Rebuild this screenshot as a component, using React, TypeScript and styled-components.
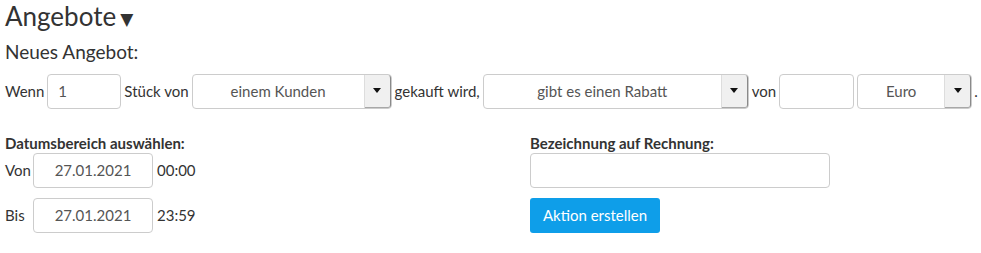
import { createGlobalStyle } from "styled-components";
import styled from "styled-components";

const GlobalStyle = createGlobalStyle`
  html, body {
    margin: 0;
    padding: 0;
    background: #fff;
  }
  body {
    font-family: Lato, "Open Sans", "Liberation Sans", sans-serif;
    font-size: 15px;
    color: #333;
  }
`;

export default function App() {
    return (
        <Page>
            <GlobalStyle />
            <Title>Angebote<Caret>▼</Caret></Title>
            <SubTitle>Neues Angebot:</SubTitle>
            <OfferRow>
                <Text>Wenn</Text>
                <Input width={74} defaultValue="1" align="left" />
                <Text>Stück von</Text>
                <Select width={200} label="einem Kunden" />
                <Text>gekauft wird,</Text>
                <Select width={266} label="gibt es einen Rabatt" />
                <Text>von</Text>
                <Input width={75} defaultValue="" />
                <Select width={115} label="Euro" />
                <Dot>.</Dot>
            </OfferRow>
            <Columns>
                <Column>
                    <Label>Datumsbereich auswählen:</Label>
                    <DateRow>
                        <DateLabel>Von</DateLabel>
                        <Input width={120} defaultValue="27.01.2021" />
                        <Text>00:00</Text>
                    </DateRow>
                    <DateRow>
                        <DateLabel>Bis</DateLabel>
                        <Input width={120} defaultValue="27.01.2021" />
                        <Text>23:59</Text>
                    </DateRow>
                </Column>
                <Column>
                    <Label>Bezeichnung auf Rechnung:</Label>
                    <Input width={300} defaultValue="" />
                    <Button type="button">Aktion erstellen</Button>
                </Column>
            </Columns>
        </Page>
    )
}

const Select = ({ width, label }: { width: number; label: string }) => (
    <SelectBox style={{ width }}>
        <SelectText>{label}</SelectText>
        <SelectButton>
            <svg width="8" height="5" viewBox="0 0 8 5"><path d="M0 0h8L4 5z" fill="#111" /></svg>
        </SelectButton>
    </SelectBox>
)

const Page = styled.div`
  padding: 1px 5px 0;
`

const Title = styled.h2`
  margin: 0;
  font-size: 26px;
  font-weight: 400;
  line-height: 1.2;
  color: #333;
  white-space: nowrap;
`

const Caret = styled.span`
  font-family: "DejaVu Sans", sans-serif;
  font-size: 17px;
  margin-left: 4px;
  vertical-align: 1px;
`

const SubTitle = styled.h3`
  margin: 9px 0 0;
  font-size: 19px;
  font-weight: 400;
  line-height: 1.2;
`

const OfferRow = styled.div`
  margin-top: 10px;
  display: flex;
  align-items: center;
  gap: 3px;
  height: 35px;
`

const Text = styled.span`
  white-space: nowrap;
  flex-shrink: 0;
`

const Dot = styled.span`
  margin-left: -1px;
`

const Input = styled.input<{ width: number; align?: string }>`
  box-sizing: border-box;
  width: ${(props) => props.width}px;
  height: 35px;
  border: 1px solid #ccc;
  border-radius: 4px;
  padding: 0 10px;
  font-family: inherit;
  font-size: 15px;
  color: #555;
  text-align: ${(props) => props.align || 'center'};
  outline: none;
  flex-shrink: 0;
`

const SelectBox = styled.div`
  box-sizing: border-box;
  height: 35px;
  display: flex;
  border: 1px solid #ccc;
  border-radius: 4px;
  flex-shrink: 0;
  overflow: hidden;
`

const SelectText = styled.div`
  flex: 1;
  display: flex;
  align-items: center;
  justify-content: center;
  color: #555;
  white-space: nowrap;
`

const SelectButton = styled.div`
  box-sizing: border-box;
  width: 28px;
  display: flex;
  align-items: center;
  justify-content: center;
  background: #f0f0f0;
  border-left: 1px solid #ddd;
  border-right: 2px solid #8a8a8a;
  border-bottom: 2px solid #a8a8a8;
  margin-right: -1px;
  margin-bottom: -1px;
  border-radius: 0 4px 4px 0;
`

const Columns = styled.div`
  margin-top: 24px;
  display: grid;
  grid-template-columns: 525px 1fr;
`

const Column = styled.div`
  display: flex;
  flex-direction: column;
  align-items: flex-start;
`

const Label = styled.div`
  font-weight: 700;
  line-height: 20px;
  white-space: nowrap;
`

const DateRow = styled.div`
  display: flex;
  align-items: center;
  gap: 4px;
  & + & {
    margin-top: 10px;
  }
`

const DateLabel = styled.span`
  width: 24px;
`

const Button = styled.button`
  margin-top: 10px;
  height: 35px;
  padding: 0 13px;
  border: none;
  border-radius: 3px;
  background: #0e9ee9;
  color: #fff;
  font-family: inherit;
  font-size: 15px;
`
